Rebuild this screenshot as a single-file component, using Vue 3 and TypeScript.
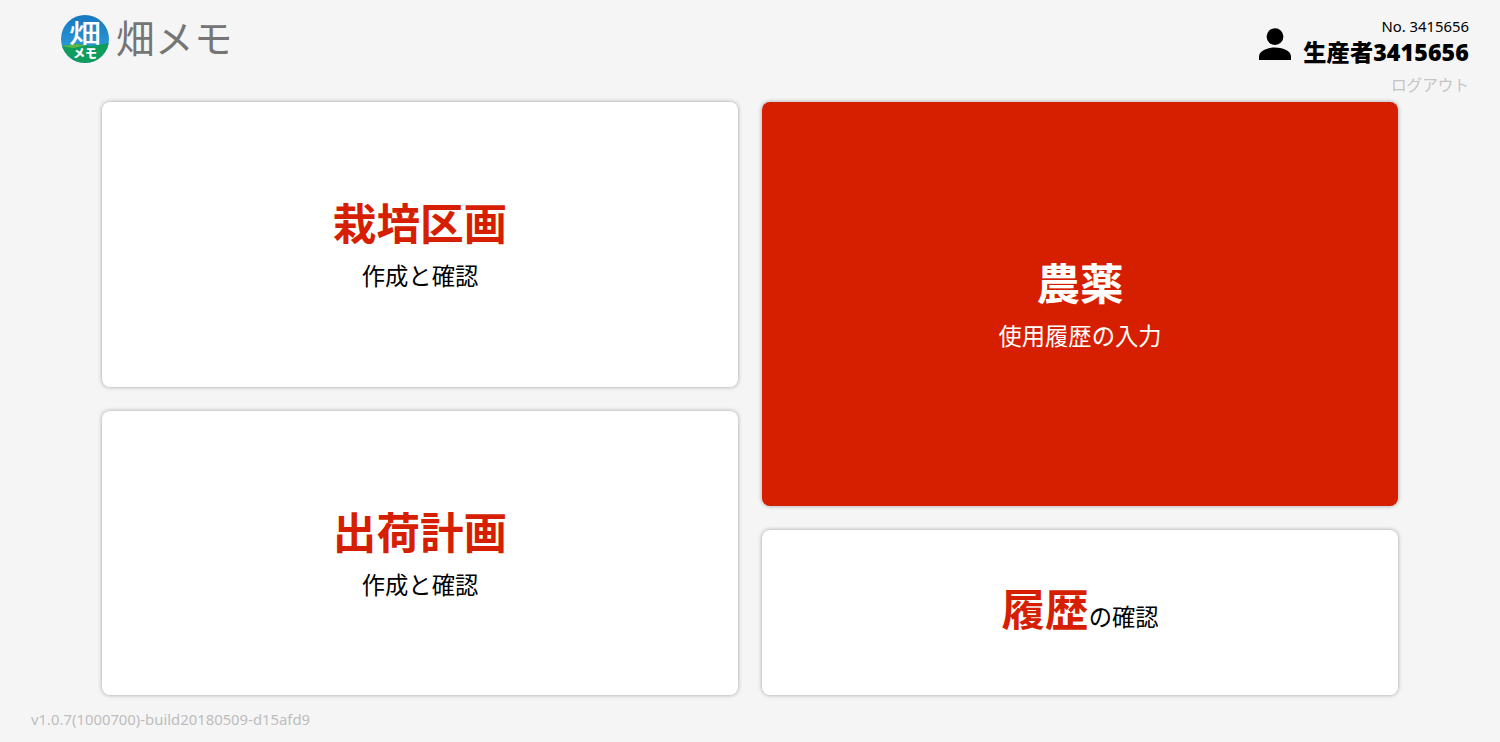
<template>
  <div class="page">
    <header class="top">
      <div class="brand">
        <svg class="brand__mark" viewBox="0 0 48 48" width="48" height="48">
          <defs>
            <clipPath id="markClip"><circle cx="24" cy="24" r="24" /></clipPath>
            <linearGradient id="markSky" x1="0" y1="0" x2="0" y2="1">
              <stop offset="0" stop-color="#1578bd" />
              <stop offset="0.65" stop-color="#2a96d6" />
            </linearGradient>
          </defs>
          <g clip-path="url(#markClip)">
            <rect width="48" height="48" fill="url(#markSky)" />
            <path d="M0 31 L16 29 L30 31 L48 28 V48 H0 Z" fill="#0f9c5c" />
            <path d="M0 31 L16 29 L26 30.5 L12 33 Z" fill="#5cb644" />
          </g>
          <text class="brand__glyph" text-anchor="middle" transform="translate(24 28) scale(1 0.8)">畑</text>
          <text x="24" y="43" class="brand__sub" text-anchor="middle">メモ</text>
        </svg>
        <span class="brand__name">畑メモ</span>
      </div>
      <div class="user">
        <div class="user__no">No. {{ producerNo }}</div>
        <div class="user__row">
          <svg class="user__icon" viewBox="0 0 32 33" width="32" height="33">
            <circle cx="16" cy="8.6" r="8.4" />
            <path d="M0 32 V28.5 C0 22.5 9 19.5 16 19.5 C23 19.5 32 22.5 32 28.5 V32 Z" />
          </svg>
          <span class="user__name">生産者{{ producerNo }}</span>
        </div>
        <div class="user__logout">ログアウト</div>
      </div>
    </header>

    <main class="menu">
      <div class="menu__col">
        <a class="card card--half">
          <span class="card__title">栽培区画</span>
          <span class="card__sub">作成と確認</span>
        </a>
        <a class="card card--half">
          <span class="card__title">出荷計画</span>
          <span class="card__sub">作成と確認</span>
        </a>
      </div>
      <div class="menu__col">
        <a class="card card--main">
          <span class="card__title">農薬</span>
          <span class="card__sub">使用履歴の入力</span>
        </a>
        <a class="card card--small">
          <span class="card__inline"><span class="card__title">履歴</span><span class="card__sub">の確認</span></span>
        </a>
      </div>
    </main>

    <footer class="version">v1.0.7(1000700)-build20180509-d15afd9</footer>
  </div>
</template>

<script setup lang="ts">
const producerNo: string = '3415656'
</script>

<style>
html,
body {
  margin: 0;
  background: #f5f5f5;
}
</style>

<style scoped>
.page {
  height: 742px;
  box-sizing: border-box;
  overflow: hidden;
  background: #f5f5f5;
  font-family: "Noto Sans", "Noto Sans CJK JP", sans-serif;
  color: #000;
  display: flex;
  flex-direction: column;
}
.top {
  height: 102px;
  flex: none;
  display: flex;
  justify-content: space-between;
  align-items: flex-start;
  padding: 15px 31px 0 61px;
  box-sizing: border-box;
}
.brand {
  display: flex;
  align-items: flex-start;
  column-gap: 7px;
}
.brand__mark {
  display: block;
  overflow: visible;
}
.brand__glyph {
  font-family: "Noto Sans CJK JP", sans-serif;
  font-size: 32px;
  font-weight: 500;
  fill: #fff;
}
.brand__sub {
  font-family: "Noto Sans CJK JP", sans-serif;
  font-size: 12px;
  font-weight: 900;
  fill: #fff;
}
.brand__name {
  font-family: "Noto Sans CJK JP", sans-serif;
  font-size: 38.5px;
  font-weight: 400;
  line-height: 46px;
  color: #757575;
  letter-spacing: 0.5px;
  margin-top: -2px;
}
.user {
  display: flex;
  flex-direction: column;
  align-items: flex-end;
  margin-top: 2px;
}
.user__no {
  font-size: 14.85px;
  line-height: 19px;
}
.user__row {
  display: flex;
  align-items: flex-start;
  column-gap: 12px;
  height: 30px;
  margin-top: 1px;
}
.user__icon {
  display: block;
  margin-top: -9px;
}
.user__name {
  font-size: 23.2px;
  font-weight: 900;
  line-height: 30px;
  letter-spacing: 0.1px;
}
.user__logout {
  font-size: 15.6px;
  line-height: 22px;
  margin-top: 7px;
  color: #c4c4c4;
}
.menu {
  display: grid;
  grid-template-columns: 636px 636px;
  column-gap: 24px;
  height: 593px;
  flex: none;
  margin-left: 102px;
}
.menu__col {
  display: flex;
  flex-direction: column;
  row-gap: 24px;
  min-height: 0;
}
.card {
  display: flex;
  flex-direction: column;
  align-items: center;
  justify-content: center;
  background: #fff;
  border-radius: 8px;
  box-shadow: 0 0 4px rgba(0, 0, 0, 0.35);
  box-sizing: border-box;
  padding-bottom: 3px;
}
.card--half {
  flex: 1 1 0;
}
.card--main {
  flex: none;
  height: 404px;
  background: #d61f00;
  color: #fff;
}
.card--small {
  flex: 1 1 0;
  padding-bottom: 7px;
}
.card__title {
  font-size: 43.6px;
  font-weight: 700;
  line-height: 60px;
  color: #d61f00;
  margin-bottom: 7px;
}
.card--main .card__title {
  color: #fff;
}
.card--small .card__title {
  margin-bottom: 0;
}
.card__sub {
  font-size: 23.3px;
  line-height: 32px;
}
.card__inline {
  display: flex;
  align-items: baseline;
}
.version {
  font-size: 14.85px;
  line-height: 20px;
  color: #bdbdbd;
  margin: 14px 0 0 31px;
}
</style>
